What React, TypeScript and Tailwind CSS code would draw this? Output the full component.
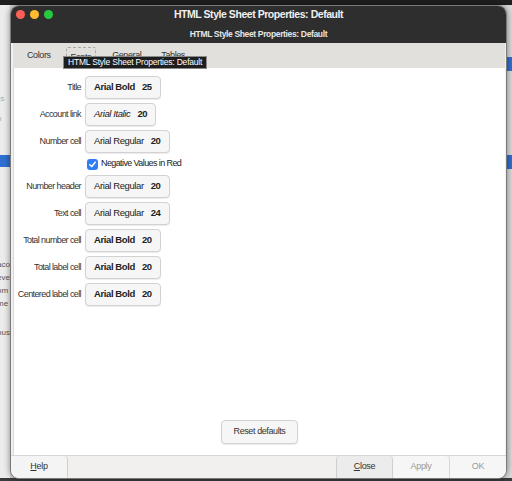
import React from 'react';

const font = { fontFamily: '"Liberation Sans", Arial, sans-serif' };

type Row = { label: string; name: string; size: number; style: 'bold' | 'italic' | 'regular' };

const rows: Row[] = [
  { label: 'Title', name: 'Arial Bold', size: 25, style: 'bold' },
  { label: 'Account link', name: 'Arial Italic', size: 20, style: 'italic' },
  { label: 'Number cell', name: 'Arial Regular', size: 20, style: 'regular' },
  { label: 'Number header', name: 'Arial Regular', size: 20, style: 'regular' },
  { label: 'Text cell', name: 'Arial Regular', size: 24, style: 'regular' },
  { label: 'Total number cell', name: 'Arial Bold', size: 20, style: 'bold' },
  { label: 'Total label cell', name: 'Arial Bold', size: 20, style: 'bold' },
  { label: 'Centered label cell', name: 'Arial Bold', size: 20, style: 'bold' },
];

function FontButton({ row }: { row: Row }) {
  const nameCls =
    row.style === 'bold' ? 'font-bold' : row.style === 'italic' ? 'italic' : '';
  return (
    <button className="h-[23px] px-[8px] flex items-center gap-[7px] rounded-[4px] border border-[#d2d2d2] bg-[#f6f6f6] shadow-[0_1px_1px_rgba(0,0,0,0.08)] text-[9.5px] tracking-[-0.4px] text-[#222]">
      <span className={nameCls}>{row.name}</span>
      <span className="font-bold">{row.size}</span>
    </button>
  );
}

function LabelledRow({ row }: { row: Row }) {
  return (
    <div className="flex items-center">
      <div className="w-[67px] text-right text-[9px] tracking-[-0.6px] text-[#333] whitespace-nowrap">
        {row.label}
      </div>
      <div className="pl-[4px]">
        <FontButton row={row} />
      </div>
    </div>
  );
}

export default function App() {
  return (
    <div style={font} className="relative w-[512px] h-[481px] overflow-hidden bg-[#d6d6d6]">
      {/* desktop / window behind */}
      <div className="absolute left-0 top-0 w-full h-[5px] bg-[#1f1f1f]" />
      <div className="absolute left-0 top-[5px] w-[10px] h-[476px] bg-[#ececec] text-[8px] text-[#555] leading-none overflow-hidden">
        <div className="absolute top-[90px] left-[-4px] text-[#aaa]">gs</div>
        <div className="absolute top-[110px] left-[-3px] text-[#aaa]">n</div>
        <div className="absolute top-[150px] left-0 w-[10px] h-[12px] bg-[#2f6fd1]" />
        <div className="absolute top-[256px] left-[-3px]">aco</div>
        <div className="absolute top-[269px] left-[-3px]">eve</div>
        <div className="absolute top-[282px] left-[-3px]">om</div>
        <div className="absolute top-[295px] left-[-3px]">me</div>
        <div className="absolute top-[324px] left-[-3px]">ous</div>
      </div>
      <div className="absolute right-0 top-[5px] w-[6px] h-[476px] bg-[#d9d9d9]">
        <div className="absolute top-[52px] left-0 w-[6px] h-[14px] bg-[#2f6fd1]" />
        <div className="absolute top-[150px] left-0 w-[6px] h-[14px] bg-[#2f6fd1]" />
      </div>
      <div className="absolute left-0 bottom-0 w-full h-[3px] bg-[#3a3a3a]" />

      {/* dialog */}
      <div className="absolute left-[10px] top-[5px] w-[497px] h-[474px] rounded-[9px] overflow-hidden flex flex-col bg-[#f1f0ef] shadow-[0_0_6px_rgba(0,0,0,0.45)] border border-[#7a7a7a]">
        {/* title bar */}
        <div className="h-[37px] bg-[#2e2e2e] relative flex flex-col items-center shrink-0">
          <div className="absolute left-[5px] top-[4px] flex gap-[5px]">
            <span className="w-[9px] h-[9px] rounded-full bg-[#ff5f57]" />
            <span className="w-[9px] h-[9px] rounded-full bg-[#febc2e]" />
            <span className="w-[9px] h-[9px] rounded-full bg-[#28c840]" />
          </div>
          <div className="mt-[1px] text-[10.5px] font-bold tracking-[-0.45px] text-[#f0f0f0]">
            HTML Style Sheet Properties: Default
          </div>
          <div className="mt-[5px] text-[8.5px] font-bold tracking-[-0.35px] text-[#e6e6e6]">
            HTML Style Sheet Properties: Default
          </div>
        </div>

        {/* tabs */}
        <div className="h-[25px] bg-[#e1e0dd] shrink-0 ml-[2px] mr-[1px] relative flex items-center text-[9px] tracking-[-0.4px] text-[#333]">
          <div className="ml-[14px]">Colors</div>
          <div className="ml-[15px] px-[4px] h-[20px] mt-[3px] flex items-start pt-[3px] border border-dashed border-[#a9a9a9] rounded-[2px]">
            Fonts
          </div>
          <div className="ml-[16px]">General</div>
          <div className="ml-[20px]">Tables</div>
          <div className="absolute left-[50px] top-[13px] h-[13px] px-[4px] flex items-center bg-[#1e1e1e] border border-[#8a8a8a] text-[8.5px] tracking-[-0.2px] text-white whitespace-nowrap z-10">
            HTML Style Sheet Properties: Default
          </div>
        </div>

        {/* content panel */}
        <div className="flex-1 bg-white ml-[2px] mr-[1px] border-l border-[#d8d8d8] flex flex-col pt-[8px]">
          <div className="flex flex-col gap-[4px]">
            <LabelledRow row={rows[0]} />
            <LabelledRow row={rows[1]} />
            <LabelledRow row={rows[2]} />
            <div className="h-[14px] flex items-center pl-[73px] gap-[3px]">
              <span className="w-[11px] h-[11px] rounded-[3px] bg-[#2f7cf6] flex items-center justify-center">
                <svg width="9" height="9" viewBox="0 0 10 10">
                  <path d="M2 5.2 L4.2 7.3 L8 2.6" fill="none" stroke="white" strokeWidth="1.7" strokeLinecap="round" strokeLinejoin="round" />
                </svg>
              </span>
              <span className="text-[9px] tracking-[-0.6px] text-[#222]">Negative Values in Red</span>
            </div>
            <LabelledRow row={rows[3]} />
            <LabelledRow row={rows[4]} />
            <LabelledRow row={rows[5]} />
            <LabelledRow row={rows[6]} />
            <LabelledRow row={rows[7]} />
          </div>
          <div className="flex-1" />
          <div className="flex justify-center mb-[11px]">
            <button className="h-[24px] w-[77px] rounded-[4px] border border-[#d2d2d2] bg-[#f6f6f6] shadow-[0_1px_1px_rgba(0,0,0,0.08)] text-[9px] tracking-[-0.4px] text-[#333]">
              Reset defaults
            </button>
          </div>
        </div>

        {/* bottom buttons */}
        <div className="h-[23px] shrink-0 flex text-[9px] tracking-[-0.3px] border-t border-[#d6d6d6]">
          <button className="w-[57px] h-full bg-[#f4f4f4] border-r border-[#cfcfcf] rounded-tr-[4px] text-[#333]">
            <span className="underline">H</span>elp
          </button>
          <div className="flex-1" />
          <button className="w-[57px] h-full bg-[#ececec] border-x border-[#cfcfcf] rounded-t-[4px] text-[#333]">
            <span className="underline">C</span>lose
          </button>
          <button className="w-[57px] h-full bg-[#f6f6f6] border-r border-[#d8d8d8] rounded-t-[4px] text-[#999]">
            Apply
          </button>
          <button className="w-[56px] h-full bg-[#f6f6f6] rounded-t-[4px] text-[#999]">OK</button>
        </div>
      </div>
    </div>
  );
}
